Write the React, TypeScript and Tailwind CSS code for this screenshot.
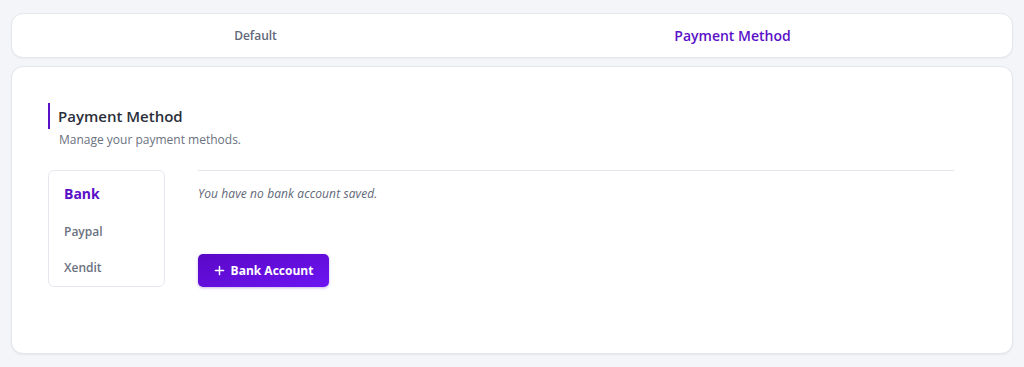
import React from "react";

export default function App() {
  return (
    <div className="min-h-[367px] w-[1024px] bg-[#f4f5f8] px-[11px] pt-[13px] pb-[13px]" style={{ fontFamily: '"Open Sans", "Noto Sans", sans-serif' }}>
      <div className="h-[45px] rounded-[12px] border border-[#e4e6ee] bg-white shadow-[0_1px_2px_rgba(0,0,0,0.04)] flex items-center pl-[5px] pr-[41px]">
        <div className="flex-1 text-center text-[12px] font-semibold text-[#5f6878]">Default</div>
        <div className="flex-1 text-center text-[14px] font-semibold text-[#5a10c8]">Payment Method</div>
      </div>
      <div className="mt-[8px] h-[288px] rounded-[12px] border border-[#e4e6ee] bg-white shadow-[0_1px_2px_rgba(0,0,0,0.06)] pl-[36px] pr-[58px] pt-[36px]">
        <div className="border-l-2 border-[#5a10c8] pl-[8px] h-[26px] flex items-center">
          <div className="text-[15px] font-semibold text-[#2a2f3a]">Payment Method</div>
        </div>
        <div className="mt-[2px] pl-[11px] text-[12px] text-[#6b7280]">Manage your payment methods.</div>
        <div className="mt-[21px] flex gap-[33px]">
          <div className="w-[117px] h-[117px] rounded-[6px] border border-[#e6e8ef] bg-white flex flex-col pl-[15px] pt-[13px]">
            <div className="text-[14px] font-bold text-[#5a10c8] h-[20px] leading-[20px]">Bank</div>
            <div className="mt-[18px] text-[12px] font-semibold text-[#6b7280] h-[20px] leading-[20px]">Paypal</div>
            <div className="mt-[16px] text-[12px] font-semibold text-[#6b7280] h-[20px] leading-[20px]">Xendit</div>
          </div>
          <div className="flex-1">
            <div className="border-t border-[#e4e6ec]" />
            <div className="mt-[14px] text-[12px] italic text-[#5f6878] tracking-[0.1px]">You have no bank account saved.</div>
            <button className="mt-[51px] h-[33px] w-[131px] rounded-[5px] bg-gradient-to-br from-[#5b08c6] to-[#6d14f2] text-white text-[12px] font-bold flex items-center justify-center gap-[6px] shadow-[0_1px_3px_rgba(80,10,180,0.3)]">
              <svg width="11" height="11" viewBox="0 0 12 12" fill="none" stroke="white" strokeWidth="1.6" strokeLinecap="round"><path d="M6 1.5v9M1.5 6h9" /></svg>
              <span>Bank Account</span>
            </button>
          </div>
        </div>
      </div>
    </div>
  );
}
